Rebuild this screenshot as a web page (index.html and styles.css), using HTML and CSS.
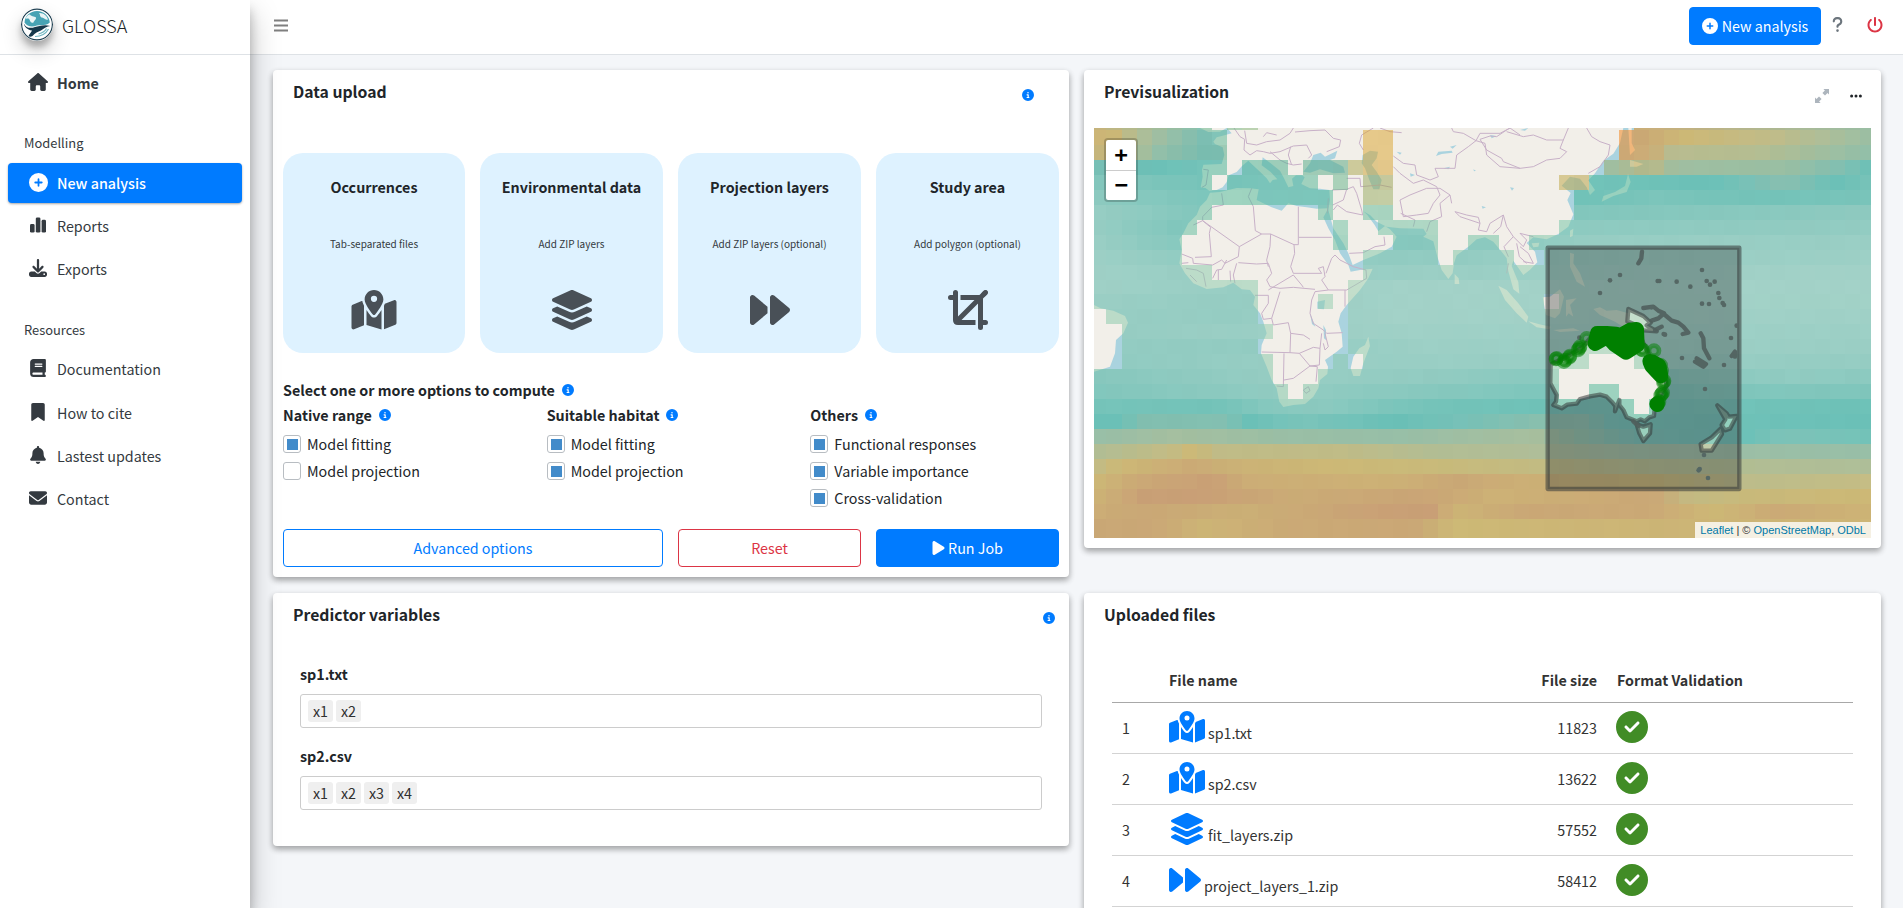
FILE: index.html
```html
<!DOCTYPE html>
<html lang="en">
<head>
<meta charset="utf-8">
<title>GLOSSA</title>
<link rel="stylesheet" href="styles.css">
</head>
<body>
<svg class="sprite" aria-hidden="true">
  <symbol id="home" viewBox="0 0 576 512"><path d="M575.8 255.5c0 18-15 32.1-32 32.1h-32l.7 160.2c0 2.7-.2 5.4-.5 8.1V472c0 22.1-17.9 40-40 40H456c-1.1 0-2.2 0-3.3-.1c-1.4 .1-2.8 .1-4.2 .1H416 392c-22.1 0-40-17.9-40-40V448 384c0-17.7-14.3-32-32-32H256c-17.7 0-32 14.3-32 32v64 24c0 22.1-17.9 40-40 40H160 128.1c-1.5 0-3-.1-4.5-.2c-1.2 .1-2.4 .2-3.6 .2H104c-22.1 0-40-17.9-40-40V360c0-.9 0-1.9 .1-2.8V287.6H32c-18 0-32-14-32-32.1c0-9 3-17 10-24L266.4 8c7-7 15-8 22-8s15 2 21 7L564.8 231.5c8 7 12 15 11 24z"/></symbol>
  <symbol id="plus" viewBox="0 0 512 512"><path d="M256 512A256 256 0 1 0 256 0a256 256 0 1 0 0 512zM232 344V280H168c-13.3 0-24-10.7-24-24s10.7-24 24-24h64V168c0-13.3 10.7-24 24-24s24 10.7 24 24v64h64c13.3 0 24 10.7 24 24s-10.7 24-24 24H280v64c0 13.3-10.7 24-24 24s-24-10.7-24-24z"/></symbol>
  <symbol id="info" viewBox="0 0 512 512"><path d="M256 512A256 256 0 1 0 256 0a256 256 0 1 0 0 512zM216 336h24V272H216c-13.3 0-24-10.7-24-24s10.7-24 24-24h48c13.3 0 24 10.7 24 24v88h8c13.3 0 24 10.7 24 24s-10.7 24-24 24H216c-13.3 0-24-10.7-24-24s10.7-24 24-24zm40-208a32 32 0 1 1 0 64 32 32 0 1 1 0-64z"/></symbol>
  <symbol id="check" viewBox="0 0 512 512"><path d="M256 512A256 256 0 1 0 256 0a256 256 0 1 0 0 512zM369 209L241 337c-9.4 9.4-24.6 9.4-33.9 0l-64-64c-9.4-9.4-9.4-24.6 0-33.9s24.6-9.4 33.9 0l47 47L335 175c9.4-9.4 24.6-9.4 33.9 0s9.4 24.6 0 33.9z"/></symbol>
  <symbol id="chart" viewBox="0 0 16 16"><rect x="0" y="7" width="4.6" height="8.6" rx="1.4"/><rect x="5.8" y="0.4" width="4.6" height="15.2" rx="1.4"/><rect x="11.6" y="2.8" width="4.4" height="12.8" rx="1.4"/></symbol>
  <symbol id="download" viewBox="0 0 512 512"><path d="M288 32c0-17.7-14.3-32-32-32s-32 14.3-32 32V274.7l-73.4-73.4c-12.5-12.5-32.8-12.5-45.3 0s-12.5 32.8 0 45.3l128 128c12.5 12.5 32.8 12.5 45.3 0l128-128c12.5-12.5 12.5-32.8 0-45.3s-32.8-12.5-45.3 0L288 274.7V32zM64 352c-35.3 0-64 28.7-64 64v32c0 35.3 28.7 64 64 64H448c35.3 0 64-28.7 64-64V416c0-35.3-28.7-64-64-64H346.5l-45.3 45.3c-25 25-65.5 25-90.5 0L165.5 352H64zm368 56a24 24 0 1 1 0 48 24 24 0 1 1 0-48z"/></symbol>
  <symbol id="book" viewBox="0 0 448 512"><path d="M96 0C43 0 0 43 0 96V416c0 53 43 96 96 96H384h32c17.7 0 32-14.3 32-32s-14.3-32-32-32V384c17.7 0 32-14.3 32-32V32c0-17.7-14.3-32-32-32H384 96zm0 384H352v64H96c-17.7 0-32-14.3-32-32s14.3-32 32-32zm32-240c0-8.8 7.2-16 16-16H336c8.8 0 16 7.2 16 16s-7.2 16-16 16H144c-8.8 0-16-7.2-16-16zm16 48H336c8.8 0 16 7.2 16 16s-7.2 16-16 16H144c-8.8 0-16-7.2-16-16s7.2-16 16-16z"/></symbol>
  <symbol id="bookmark" viewBox="0 0 384 512"><path d="M0 48V487.7C0 501.1 10.9 512 24.3 512c5 0 9.9-1.5 14-4.4L192 400 345.7 507.6c4.1 2.9 9 4.4 14 4.4c13.4 0 24.3-10.9 24.3-24.3V48c0-26.5-21.5-48-48-48H48C21.5 0 0 21.5 0 48z"/></symbol>
  <symbol id="bell" viewBox="0 0 448 512"><path d="M224 0c-17.7 0-32 14.3-32 32V51.2C119 66 64 130.6 64 208v18.8c0 47-17.3 92.4-48.5 127.6l-7.4 8.3c-8.4 9.4-10.4 22.9-5.3 34.4S19.4 416 32 416H416c12.6 0 24-7.4 29.2-18.9s3.1-25-5.3-34.4l-7.4-8.3C401.3 319.2 384 273.9 384 226.8V208c0-77.4-55-142-128-156.8V32c0-17.7-14.3-32-32-32zm45.3 493.3c12-12 18.7-28.3 18.7-45.3H224 160c0 17 6.7 33.3 18.7 45.3s28.3 18.7 45.3 18.7s33.3-6.7 45.3-18.7z"/></symbol>
  <symbol id="envelope" viewBox="0 0 512 512"><path d="M48 64C21.5 64 0 85.5 0 112c0 15.1 7.1 29.3 19.2 38.4L236.8 313.6c11.4 8.5 27 8.5 38.4 0L492.8 150.4c12.1-9.1 19.2-23.3 19.2-38.4c0-26.5-21.5-48-48-48H48zM0 176V384c0 35.3 28.7 64 64 64H448c35.3 0 64-28.7 64-64V176L294.4 339.2c-22.8 17.1-54 17.1-76.8 0L0 176z"/></symbol>
  <symbol id="power" viewBox="0 0 512 512"><path d="M288 32c0-17.7-14.3-32-32-32s-32 14.3-32 32V256c0 17.7 14.3 32 32 32s32-14.3 32-32V32zM143.5 120.6c13.6-11.3 15.4-31.5 4.1-45.1s-31.5-15.4-45.1-4.1C49.7 115.4 16 181.8 16 256c0 132.5 107.5 240 240 240s240-107.5 240-240c0-74.2-33.8-140.6-86.6-184.6c-13.6-11.3-33.8-9.4-45.1 4.1s-9.4 33.8 4.1 45.1c38.9 32.3 63.5 81 63.5 135.4c0 97.2-78.8 176-176 176s-176-78.8-176-176c0-54.4 24.7-103.1 63.5-135.4z"/></symbol>
  <symbol id="question" viewBox="0 0 320 512"><path d="M80 160c0-35.3 28.7-64 64-64h32c35.3 0 64 28.7 64 64v3.6c0 21.8-11.1 42.1-29.4 53.8l-42.2 27.1c-25.2 16.2-40.4 44.1-40.4 74V320c0 17.7 14.3 32 32 32s32-14.3 32-32v-1.4c0-8.2 4.2-15.8 11-20.2l42.2-27.1c36.6-23.6 58.8-64.1 58.8-107.7V160c0-70.7-57.3-128-128-128H144C73.3 32 16 89.3 16 160c0 17.7 14.3 32 32 32s32-14.3 32-32zm80 320a40 40 0 1 0 0-80 40 40 0 1 0 0 80z"/></symbol>
  <symbol id="layers" viewBox="0 0 576 512"><path d="M264.5 5.2c14.9-6.9 32.1-6.9 47 0l218.6 101c8.5 3.9 13.9 12.4 13.9 21.8s-5.4 17.9-13.9 21.8l-218.6 101c-14.9 6.9-32.1 6.9-47 0L45.9 149.8C37.4 145.8 32 137.3 32 128s5.4-17.9 13.9-21.8L264.5 5.2zM476.9 209.6l53.2 24.6c8.5 3.9 13.9 12.4 13.9 21.8s-5.4 17.9-13.9 21.8l-218.6 101c-14.9 6.9-32.1 6.9-47 0L45.9 277.8C37.4 273.8 32 265.3 32 256s5.4-17.9 13.9-21.8l53.2-24.6 152 70.2c23.4 10.8 50.4 10.8 73.8 0l152-70.2zm-152 198.2l152-70.2 53.2 24.6c8.5 3.9 13.9 12.4 13.9 21.8s-5.4 17.9-13.9 21.8l-218.6 101c-14.9 6.9-32.1 6.9-47 0L45.9 405.8C37.4 401.8 32 393.3 32 384s5.4-17.9 13.9-21.8l53.2-24.6 152 70.2c23.4 10.8 50.4 10.8 73.8 0z"/></symbol>
  <symbol id="map" viewBox="0 0 576 512"><path d="M408 120c0 54.6-73.1 151.9-105.2 192c-7.7 9.6-22 9.6-29.6 0C241.1 271.9 168 174.6 168 120C168 53.7 221.7 0 288 0s120 53.7 120 120zm8 80.4c3.5-6.9 6.7-13.8 9.6-20.6c.5-1.2 1-2.5 1.5-3.7l116-46.4C558.9 123.4 576 135 576 152V422.8c0 9.8-6 18.6-15.1 22.3L416 503V200.4zM137.6 138.3c2.4 14.1 7.2 28.3 12.8 41.5c2.9 6.8 6.1 13.7 9.6 20.6V451.8L32.9 502.7C17.1 509 0 497.4 0 480.4V209.6c0-9.8 6-18.6 15.1-22.3l122.6-49zM327.8 332c13.9-17.4 35.7-45.7 56.2-77V504.3L192 449.4V255c20.5 31.3 42.3 59.6 56.2 77c20.5 25.6 59.1 25.6 79.6 0zM288 152a40 40 0 1 0 0-80 40 40 0 1 0 0 80z"/></symbol>
  <symbol id="forward" viewBox="0 0 512 512"><path d="M52.5 440.6c-9.5 7.9-22.8 9.7-34.1 4.4S0 428.4 0 416V96C0 83.6 7.2 72.3 18.4 67s24.5-3.6 34.1 4.4L224 214.3V256v41.7L52.5 440.6zM256 352V256 128 96c0-12.4 7.2-23.7 18.4-29s24.5-3.6 34.1 4.4l192 160c7.3 6.1 11.5 15.1 11.5 24.6s-4.2 18.5-11.5 24.6l-192 160c-9.5 7.9-22.8 9.7-34.1 4.4s-18.4-16.6-18.4-29V352z"/></symbol>
  <symbol id="play" viewBox="0 0 384 512"><path d="M73 39c-14.8-9.1-33.4-9.4-48.5-.9S0 62.6 0 80V432c0 17.4 9.4 33.4 24.5 41.9s33.7 8.1 48.5-.9L361 297c14.3-8.7 23-24.2 23-41s-8.7-32.2-23-41L73 39z"/></symbol>
  <symbol id="crop" viewBox="0 0 40 40"><g fill="none" stroke="currentColor" stroke-width="5"><path d="M2.5 7.5H7.5V30Q7.5 32.5 10 32.5H27.5M7.5 2.5V10M12.5 7.5H32.5V37.5M32.5 32.5H37.5M37.5 2.5L9 31" stroke-linecap="butt"/><path d="M2.5 7.5H5M7.5 2.5V5M37.5 2.5L36 4M32.5 36V37.5M36 32.5H37.5" stroke-linecap="round"/></g></symbol>
  <symbol id="expand" viewBox="0 0 14 14"><path d="M8.4 0H14V5.6L12.500 4.100 10 6.600 7.400 4 9.900 1.500ZM5.600 14H0V8.400L1.500 9.900 4 7.400 6.600 10 4.100 12.500Z"/></symbol>
</svg>

<aside class="sidebar">
  <div class="brand">
    <svg class="logo" viewBox="0 0 32 32">
      <circle cx="16" cy="16" r="15.4" fill="#fff" stroke="#1f4052" stroke-width="1.2"/>
      <path d="M3.5 14C4 7 9 2.800 16 2.500C23 2.500 28.500 8 28.800 14C25 18 20 16 16 17C11 19 6 18 3.500 14Z" fill="#47a3b4"/>
      <path d="M4.500 10C6 7 8 5.500 9 6C10 8 13 7.500 15 9C15.500 11 13 12 12.500 14C9 15 9.500 12 8 10.500C7 9.500 5.500 10.500 4.500 10ZM18 4.500C22 4 26 7 27 11C24 12 23 9 20.500 9C18.500 8 19.500 6 18 4.500Z" fill="#e9f4f5"/>
      <path d="M2.800 15C5 20 10 20 14 18.500C18 17.500 24 15.500 29.200 17.500C26 17.500 23 20 20 22C17 23.500 14 24 11.500 27.500C10 28.500 8.500 28.500 7.500 27.500C8.500 25.500 10 24 11 22C7 21.500 3.500 19 2.800 15Z" fill="#17384b"/>
      <path d="M14 28C20 28 25 25 27.500 20.500M17.500 25.500C21 24.500 24 23 25.500 20" fill="none" stroke="#6fb5c0" stroke-width="1.200"/>
    </svg>
    <span class="brand-name">GLOSSA</span>
  </div>
  <nav class="menu">
    <a class="item strong"><i><svg width="20" height="18"><use href="#home"/></svg></i>Home</a>
    <div class="group">Modelling</div>
    <a class="item active"><i><svg width="19" height="19"><use href="#plus"/></svg></i>New analysis</a>
    <a class="item"><i><svg width="16" height="16"><use href="#chart"/></svg></i>Reports</a>
    <a class="item"><i><svg width="18" height="18"><use href="#download"/></svg></i>Exports</a>
    <div class="group">Resources</div>
    <a class="item"><i><svg width="16" height="18"><use href="#book"/></svg></i>Documentation</a>
    <a class="item offset"><i><svg width="14" height="18"><use href="#bookmark"/></svg></i>How to cite</a>
    <a class="item"><i><svg width="16" height="18"><use href="#bell"/></svg></i>Lastest updates</a>
    <a class="item"><i><svg width="18" height="18"><use href="#envelope"/></svg></i>Contact</a>
  </nav>
</aside>

<div class="page">
  <header class="topbar">
    <svg class="burger" width="14" height="13" viewBox="0 0 14 13"><path d="M0 1.500H14M0 6.500H14M0 11.500H14" stroke="#7f7f7f" stroke-width="1.800"/></svg>
    <div class="tools">
      <button class="btn solid new"><svg width="16" height="16"><use href="#plus"/></svg>New analysis</button>
      <svg class="q" width="11" height="17"><use href="#question"/></svg>
      <svg class="off" width="16" height="16"><use href="#power"/></svg>
    </div>
  </header>

  <main class="board">
    <section class="card upload">
      <div class="head"><h3>Data upload</h3><svg class="info" width="12" height="12"><use href="#info"/></svg></div>
      <div class="tiles">
        <div class="tile"><b>Occurrences</b><small>Tab-separated files</small><svg width="46" height="40"><use href="#map"/></svg></div>
        <div class="tile"><b>Environmental data</b><small>Add ZIP layers</small><svg width="46" height="40"><use href="#layers"/></svg></div>
        <div class="tile"><b>Projection layers</b><small>Add ZIP layers (optional)</small><svg width="40" height="40"><use href="#forward"/></svg></div>
        <div class="tile"><b>Study area</b><small>Add polygon (optional)</small><svg width="40" height="40"><use href="#crop"/></svg></div>
      </div>
      <div class="lead">Select one or more options to compute <svg class="info" width="12" height="12"><use href="#info"/></svg></div>
      <div class="options">
        <div><div class="opt-title">Native range <svg class="info" width="12" height="12"><use href="#info"/></svg></div>
          <label><span class="box on"></span>Model fitting</label><label><span class="box"></span>Model projection</label></div>
        <div><div class="opt-title">Suitable habitat <svg class="info" width="12" height="12"><use href="#info"/></svg></div>
          <label><span class="box on"></span>Model fitting</label><label><span class="box on"></span>Model projection</label></div>
        <div><div class="opt-title">Others <svg class="info" width="12" height="12"><use href="#info"/></svg></div>
          <label><span class="box on"></span>Functional responses</label><label><span class="box on"></span>Variable importance</label><label><span class="box on"></span>Cross-validation</label></div>
      </div>
      <div class="actions">
        <button class="btn blue">Advanced options</button>
        <button class="btn red">Reset</button>
        <button class="btn solid run"><svg width="13" height="16"><use href="#play"/></svg>Run Job</button>
      </div>
    </section>

    <section class="card preview">
      <div class="head"><h3>Previsualization</h3>
        <div class="head-tools"><svg class="expand" width="14" height="14"><use href="#expand"/></svg>
        <svg width="12" height="4" viewBox="0 0 12 4"><circle cx="1.600" cy="2" r="1.500"/><circle cx="6" cy="2" r="1.500"/><circle cx="10.400" cy="2" r="1.500"/></svg></div>
      </div>
      <div class="map">
        <svg class="canvas" width="777" height="410" viewBox="42 84 2331 1230">
          <g id="land" fill="#f2efe9">
            <path d="M441 84L455 100 425 108 410 112 400 125 405 132 428 142 433 165 425 192 370 194 366 210 368 230 362 262 376 264 388 272 410 270 428 262 440 246 446 226 470 216 486 198 505 182 515 192 540 215 560 235 570 250 578 240 592 238 572 216 545 196 548 172 562 182 600 212 612 235 625 262 640 258 636 236 648 226 666 226 674 232 664 252 690 265 720 266 748 270 750 300 745 330 760 385 790 430 805 460 818 495 850 480 900 460 935 440 950 410 930 388 915 378 895 394 884 375 862 345 850 334 870 345 890 365 920 380 960 385 1030 386 1040 402 1030 410 1060 424 1072 470 1085 510 1105 537 1118 520 1122 490 1130 466 1165 440 1190 418 1215 412 1240 425 1265 455 1280 475 1285 514 1300 568 1318 581 1315 546 1295 498 1300 482 1330 525 1350 509 1372 487 1365 455 1340 429 1360 412 1400 418 1435 402 1465 380 1480 343 1462 300 1472 279 1445 257 1470 230 1500 236 1520 262 1530 285 1545 270 1525 241 1545 220 1570 182 1600 161 1620 129 1630 84Z"/>
            <path d="M745 325L710 326 680 322 650 318 625 310 605 332 575 322 550 310 530 300 536 268 510 265 470 264 420 276 390 278 380 300 360 320 350 345 325 370 310 400 298 418 305 450 298 490 315 520 340 550 380 567 430 562 460 548 485 568 510 570 525 590 520 615 540 640 550 665 560 700 545 735 543 760 560 800 575 840 590 865 598 905 610 921 640 915 675 912 700 890 715 865 720 840 742 822 744 800 735 780 770 755 788 740 785 700 775 665 782 640 800 615 840 570 865 535 878 506 840 510 812 515 805 495 780 460 765 420 745 385 730 352Z"/>
            <path d="M865 710L870 738 850 790 840 828 820 828 812 805 820 770 838 745 855 735ZM42 615L62 625 100 632 135 648 144 668 130 700 108 720 105 760 90 800 42 815ZM1124 522L1136 535 1138 552 1124 552ZM360 84H440L420 95 385 96Z"/>
            <path d="M1255 557L1280 570 1315 610 1345 650 1340 668 1310 640 1275 600ZM1345 664L1375 672 1412 680 1408 688 1370 682ZM1388 592L1410 590 1440 568 1452 590 1440 640 1425 655 1398 645ZM1458 600L1490 595 1470 615 1480 650 1466 640 1458 650ZM1470 458L1482 462 1480 490 1500 520 1515 560 1490 545 1470 500ZM1540 627L1560 622 1580 632 1610 630 1645 640V690L1605 665 1560 645ZM1470 392L1480 386 1478 408 1470 412ZM1645 84H1655V130L1665 150 1650 165ZM1650 180L1690 192 1670 200 1650 200ZM1644 222L1652 246 1640 276 1600 288 1565 305 1570 288 1605 276 1635 258ZM1355 430L1378 428 1375 440 1360 442ZM1420 690L1480 685 1500 692 1440 696Z"/>
            <path id="aus" d="M1412 793L1411 850 1430 885 1428 905 1420 915 1445 925 1462 914 1490 911 1500 897 1530 889 1560 884 1580 890 1595 905 1606 918 1605 934 1618 900 1618 915 1630 930 1640 952 1670 964 1682 958 1694 964 1708 952 1722 948 1725 911 1760 857 1750 804 1710 771 1690 729 1670 686 1650 729 1630 761 1600 745 1580 707 1540 702 1510 739 1460 771Z"/>
            <path id="isles" d="M1645 627L1690 648 1712 668 1700 676 1730 694 1690 691 1670 676 1642 664ZM1670 973L1690 980 1712 973 1710 1000 1690 1023 1678 1000ZM1912 916L1940 940 1946 950 1970 948 1950 986 1935 991 1925 975 1936 958ZM1922 986L1926 1002 1895 1052 1865 1052 1862 1032 1895 1012Z"/>
          </g>
          <g id="water" fill="#aad3df">
            <path d="M670 215L690 190 700 165 722 158 735 170 772 152 765 175 750 180 790 200 795 218 760 220 720 208 690 218ZM848 165L870 152 894 155 890 175 875 195 890 215 905 240 898 268 880 268 868 240 855 205 845 190ZM1068 168L1075 155 1115 152 1118 158 1085 162ZM712 605L735 600 732 628 712 626ZM730 675L738 690V720L732 715ZM690 640L706 680 696 672Z"/>
            <path d="M950 155L965 158 960 164ZM990 220L1005 225 992 230ZM1090 205L1110 200 1105 208ZM1290 262L1302 264 1296 272ZM1230 105L1250 108 1235 115ZM1110 140L1130 135 1118 146ZM1320 90L1345 84 1335 92ZM1180 208L1188 212 1182 214ZM1205 318L1218 322 1208 326Z"/>
          </g>
          <g class="borders">
            <path d="M462 84L480 110 494 118 492 150 510 165 530 152 550 155 570 160 600 155 640 138 680 135 695 165 685 175M494 92L500 130 530 135 560 125 600 120 630 100 640 84M550 110L560 98 590 105M570 155L600 180 620 190 640 195 665 192M635 195L625 165 632 140M645 96L690 92 735 90 760 115 782 120 778 140 740 155M880 84L845 105 838 130 850 150M900 84L930 95 965 98"/>
            <path d="M370 208L385 210 378 255 366 262M425 280L430 315 395 322 368 350 368 362 340 375M368 362L478 440 475 470 435 490 425 480 398 495 340 490 338 475 305 462M368 362L392 382 388 400 394 470 345 472M478 440L545 402 526 392 520 320 505 290 515 265M545 402L572 402 570 440 560 480 565 500M572 402L642 434 644 460 632 500 640 520M655 320V412H755M655 412V434H642M475 488L530 492 565 490 575 520 560 540 570 560 600 565 640 562 705 568M565 570L640 525 665 555 670 562M640 520L725 520 715 505 730 500 735 530 725 540 745 570 800 570 860 535 858 510 820 500 780 480 765 465 755 475 738 520M745 570L705 575 695 600 690 640 700 670 730 690 740 700 788 698M525 586H565V610L545 640 550 658 575 655 600 575M575 655L580 675 625 668 632 700 670 705 690 718M632 700L630 758 545 756M630 758L658 760 700 742 720 745M658 760L690 798 718 795 720 745 725 700M612 760L610 860 590 858M612 840L640 835 690 798 712 800 708 845M670 870L685 860 690 872 678 880ZM735 700L745 740 735 750 730 730M795 570V620M398 535L410 510 425 508 440 480M415 510V540M450 512L452 545M470 490L460 525 465 550M305 490L325 488M318 505L350 510 370 520 378 560M330 525L350 545"/>
            <path d="M756 270L800 268 820 260 830 280 845 330 848 345 800 335 772 315 760 330M745 295L742 340M800 268L790 300 758 315M808 460L850 458 885 440 915 435 912 410M800 235L840 235 842 260 900 255 935 262M940 168L970 190 1005 195 1010 225 1050 240 1075 230 1065 205 1100 205 1125 205 1130 165 1165 140 1188 122 1150 100 1120 95 1115 84M940 200L960 220 1000 250 1030 240 1070 260 1080 285 1060 310 1045 340 1010 345 970 350 960 300 990 285 1040 265 1080 265 1110 285 1115 310M962 340L1005 360 1000 380M1040 395L1050 365 1085 350 1080 310 1110 285M1125 335L1140 350 1200 370 1195 352 1160 345 1125 335M1200 370L1195 390 1220 395 1230 370 1270 345 1262 380 1240 400M1188 122L1215 130 1220 165 1260 200 1320 205M1188 122L1200 100 1260 100 1290 84 1320 105M1270 345L1280 380 1300 410 1272 440 1285 470M1300 410L1330 440 1340 420 1320 400 1360 410M1320 440L1345 460 1360 490 1330 485M1310 430L1318 470 1340 490M1285 490L1280 520"/>
            <path d="M1200 118L1230 108 1250 110 1280 90 1290 84M1200 118L1220 150 1265 175 1270 185 1320 205 1360 200 1400 180 1440 175 1460 155 1440 145 1450 120 1400 120 1360 105 1330 110 1280 95M1450 120L1465 84M1520 84L1535 110 1560 125 1590 135 1585 165 1560 200 1525 220"/>
          </g>
          <g id="raster" opacity=".5" shape-rendering="crispEdges"></g>
          <path class="zone" fill-rule="evenodd" d="M1403 443H1978V1167H1403ZM1412 793L1411 850 1430 885 1428 905 1420 915 1445 925 1462 914 1490 911 1500 897 1530 889 1560 884 1580 890 1595 905 1606 918 1605 934 1618 900 1618 915 1630 930 1640 952 1670 964 1682 958 1694 964 1708 952 1722 948 1725 911 1760 857 1750 804 1710 771 1690 729 1670 686 1650 729 1630 761 1600 745 1580 707 1540 702 1510 739 1460 771ZM1645 627L1690 648 1712 668 1700 676 1730 694 1690 691 1670 676 1642 664ZM1670 973L1690 980 1712 973 1710 1000 1690 1023 1678 1000ZM1912 916L1940 940 1946 950 1970 948 1950 986 1935 991 1925 975 1936 958ZM1922 986L1926 1002 1895 1052 1865 1052 1862 1032 1895 1012Z"/>
          <path class="chain" d="M1686 455L1684 475 1675 490M1690 624L1720 620 1735 632 1752 640 1735 655 1715 662M1755 645L1775 662 1795 668 1810 680 1825 698 1808 702M1725 690L1745 680M1660 964L1675 978M1862 700L1870 715 1872 745 1888 775M1845 785L1870 800 1878 792 1850 775M1955 768L1965 755 1965 770"/>
          <g id="islets"></g>
          <g id="sightings"></g>
        </svg>
        <div class="zoom"><span>+</span><span>−</span></div>
        <div class="credit"><a>Leaflet</a> | © <a>OpenStreetMap</a>, <a>ODbL</a></div>
      </div>
    </section>

    <section class="card predictors">
      <div class="head"><h3>Predictor variables</h3><svg class="info" width="12" height="12"><use href="#info"/></svg></div>
      <div class="field"><b>sp1.txt</b><div class="tags"><span>x1</span><span>x2</span></div></div>
      <div class="field"><b>sp2.csv</b><div class="tags"><span>x1</span><span>x2</span><span>x3</span><span>x4</span></div></div>
    </section>

    <section class="card files">
      <div class="head"><h3>Uploaded files</h3></div>
      <div class="table">
        <div class="row th"><span></span><span>File name</span><span class="num">File size</span><span>Format Validation</span></div>
        <div class="row"><span>1</span><span class="file"><svg width="36" height="32"><use href="#map"/></svg>sp1.txt</span><span class="num">11823</span><svg class="ok" width="32" height="32"><use href="#check"/></svg></div>
        <div class="row"><span>2</span><span class="file"><svg width="36" height="32"><use href="#map"/></svg>sp2.csv</span><span class="num">13622</span><svg class="ok" width="32" height="32"><use href="#check"/></svg></div>
        <div class="row"><span>3</span><span class="file"><svg width="36" height="32"><use href="#layers"/></svg>fit_layers.zip</span><span class="num">57552</span><svg class="ok" width="32" height="32"><use href="#check"/></svg></div>
        <div class="row"><span>4</span><span class="file"><svg width="32" height="32"><use href="#forward"/></svg>project_layers_1.zip</span><span class="num">58412</span><svg class="ok" width="32" height="32"><use href="#check"/></svg></div>
      </div>
    </section>
  </main>
</div>
<script src="map.js"></script>
</body>
</html>
```
FILE: map.js
```javascript
// Raster layer: one entry per row of cells, as colour stops along x (map pixels).
const rows = [
  [[0,'c9b47a'],[120,'80c4b8'],[268,'e6c98c'],[299,'e6c98c'],[540,'ccae78'],[777,'9bbfa5']],
  [[0,'ccb577'],[20,'ccb878'],[45,'b0be97'],[75,'98bfa8'],[110,'7dbfb3'],[130,'82c5b9'],[262,'80c5b9'],[275,'c2bb86'],[300,'c2bb86'],[520,'d0a878'],[550,'caaa76'],[590,'cdb977'],[680,'c0bc8a'],[740,'aabf9c'],[777,'9bbfa5']],
  [[0,'c8b579'],[18,'c2b884'],[40,'b0be97'],[66,'92bfa9'],[110,'7abdb0'],[262,'80bfb0'],[275,'c2bb86'],[300,'c2bb86'],[520,'cda676'],[560,'cbb079'],[575,'b8bc90'],[660,'b5be92'],[777,'92bfaa']],
  [[0,'78bfb5'],[60,'6cc1b8'],[130,'78c4ba'],[150,'76c2b8'],[250,'80bcaf'],[260,'a8bd98'],[280,'c0ba86'],[300,'c0ba86'],[510,'9cc0a6'],[545,'b0b98e'],[565,'b5bb8e'],[580,'a0bfa2'],[690,'9abfa3'],[740,'86c0b0'],[777,'6cc1b8']],
  [[0,'84c7bd'],[120,'76c4ba'],[240,'80c5ba'],[270,'9fbd9e'],[300,'a3bb98'],[470,'b4bb90'],[490,'b0b98f'],[500,'72c3b9'],[620,'6cc1b8'],[650,'78c2b8'],[690,'8abfb0'],[740,'6cc1b8'],[777,'78c2b8']],
  [[0,'8ecbc1'],[120,'7cc6bc'],[250,'7dc6bb'],[270,'a0bfa0'],[300,'a0bfa0'],[480,'70c2b8'],[560,'7cc5bb'],[660,'74c3b9'],[777,'7ac5bb']],
  [[0,'98cec4'],[110,'82c7bd'],[240,'85c6bb'],[480,'82c7bd'],[777,'8fcac0']],
  [[0,'98cec4'],[80,'82c7bd'],[300,'8ccac0'],[480,'8ecbc1'],[777,'93ccc2']],
  [[0,'9acfc5'],[90,'86c8be'],[300,'86c8be'],[400,'8ccac0'],[500,'98cec4'],[777,'9acfc5']],
  [[0,'9dd0c6'],[90,'92ccc2'],[350,'92ccc2'],[450,'9acfc5'],[777,'9dd0c6']],
  [[0,'a0d1c7'],[110,'98cec4'],[300,'9acfc5'],[777,'a3d2c8']],
  [[0,'a0d1c7'],[150,'98cec4'],[300,'a3d2c8'],[777,'a3d2c8']],
  [[0,'9bcfc5'],[140,'96cdc3'],[300,'a3d2c8'],[777,'a2d2c7']],
  [[0,'98cec4'],[140,'96cdc3'],[300,'a3d2c8'],[777,'a0d1c7']],
  [[0,'96cdc3'],[300,'a0d1c7'],[777,'9dd0c6']],
  [[0,'93ccc2'],[180,'93ccc2'],[330,'9dd0c6'],[777,'9bcfc5']],
  [[0,'90cbc1'],[200,'98cec4'],[330,'9acfc5'],[550,'98cec4'],[777,'96cdc3']],
  [[0,'88c8be'],[210,'98cec4'],[330,'93ccc2'],[540,'82c7bd'],[700,'92ccc2'],[777,'8ccac0']],
  [[0,'82c7bd'],[200,'93ccc2'],[330,'88c9bf'],[520,'7ac5bb'],[700,'82c7bd'],[777,'80c6bc']],
  [[0,'76c4ba'],[120,'74c3b9'],[180,'88c9bf'],[230,'8ccac0'],[330,'76c4ba'],[430,'70c2b8'],[520,'76c4ba'],[777,'6ec2b8']],
  [[0,'6cc1b8'],[25,'6cc1b8'],[50,'82bfb0'],[130,'84c0b2'],[155,'6cc1b8'],[210,'7cc5bb'],[300,'6ac0b7'],[370,'78c2b8'],[440,'88bfae'],[490,'8abfae'],[520,'72c3b9'],[777,'6cc1b8']],
  [[0,'98bfa8'],[80,'a5bfa0'],[200,'9abfa6'],[300,'98bfa8'],[440,'a8bf9e'],[540,'78c2b8'],[650,'6cc1b8'],[690,'7ec3b8'],[777,'74c3b9']],
  [[0,'b0be96'],[80,'c4bc84'],[98,'cdb977'],[125,'c0bc88'],[250,'c0bc88'],[340,'b2be95'],[430,'b0be98'],[540,'a0bfa5'],[777,'98bfa8']],
  [[0,'c0bc88'],[25,'cdb977'],[100,'cbaa77'],[130,'cbb177'],[240,'cdb977'],[350,'c8bb7c'],[450,'c2bc84'],[560,'b5bd90'],[777,'aebf9a']],
  [[0,'cdb977'],[40,'cbaa77'],[120,'c9a077'],[150,'ccae77'],[300,'cdb277'],[360,'caa877'],[420,'ccaf77'],[560,'cbb777'],[660,'bcbd8c'],[777,'c5bd85']],
  [[0,'cdb577'],[50,'c9a077'],[110,'c9a077'],[200,'cbac77'],[330,'caa577'],[400,'cdb277'],[560,'caa877'],[600,'c3bc84'],[650,'c8ba7c'],[777,'cdb977']],
  [[0,'ccae77'],[50,'caa877'],[150,'cbb077'],[300,'c9a077'],[340,'c9a077'],[360,'cdb577'],[430,'caa877'],[560,'cbaa77'],[620,'cdb977'],[680,'cbaa77'],[777,'cdb577']],
  [[0,'caa877'],[60,'caa877'],[110,'cdb577'],[200,'cbaa77'],[320,'caa877'],[360,'cdb977'],[560,'ccb577'],[777,'cdb577']]
];
// Spans of each row that carry no data.
const gaps = [
  [[118,133],[163,540]], [[133,268],[299,524]], [[133,268],[299,524]],
  [[133,148],[193,208],[299,509]], [[118,133],[223,238],[253,268],[299,464]],
  [[238,268],[299,479]], [[118,223],[238,268],[299,479]],
  [[103,238],[253,284],[344,464]], [[88,238],[253,299],[344,374],[404,434]],
  [[88,268],[344,359],[419,449]], [[118,268]], [[163,253]],
  [[163,223],[238,253],[449,464]], [[0,12],[163,253]], [[0,28],[178,253]],
  [[0,28],[163,253]], [[0,28],[178,238],[253,268],[494,540]],
  [[178,223],[464,565]], [[193,208],[464,494],[524,565]], [[540,555]]
];
const NS = 'http://www.w3.org/2000/svg';
const add = (parent, tag, attrs) => {
  const el = document.createElementNS(NS, tag);
  for (const k in attrs) el.setAttribute(k, attrs[k]);
  document.getElementById(parent).appendChild(el);
};
const rgb = h => [0, 2, 4].map(i => parseInt(h.substr(i, 2), 16));
const ocean = rgb('aad3df');
const edges = [0, 12, 28];
while (edges[edges.length - 1] < 765) edges.push(Math.round(28 + 15.06 * (edges.length - 2)));
edges.push(777);
const rowTop = r => (r === 0 ? 0 : r >= 12 ? 1 + 15 * (r - 1) : 2 + 15 * (r - 1));

rows.forEach((stops, r) => {
  const y0 = rowTop(r), y1 = r === rows.length - 1 ? 410 : rowTop(r + 1);
  for (let c = 0; c < edges.length - 1; c++) {
    const x = (edges[c] + edges[c + 1]) / 2;
    if ((gaps[r] || []).some(([a, b]) => x > a && x < b)) continue;
    let i = 1;
    while (i < stops.length - 1 && stops[i][0] < x) i++;
    const [xa, ca] = stops[i - 1], [xb, cb] = stops[i];
    const t = Math.max(0, Math.min(1, (x - xa) / (xb - xa)));
    const a = rgb(ca), b = rgb(cb);
    const jitter = ((c * 7 + r * 13) % 5 - 2) * 0.3;
    const mix = a.map((v, j) => Math.max(0, Math.min(255, Math.round(2 * (v + (b[j] - v) * t + jitter) - ocean[j]))));
    add('raster', 'rect', {
      x: 42 + edges[c] * 3, y: 84 + y0 * 3,
      width: (edges[c + 1] - edges[c]) * 3, height: (y1 - y0) * 3,
      fill: `rgb(${mix})`
    });
  }
});

[[1590,541],[1620,525],[1560,579],[1733,543],[1738,543],[1790,545],[1831,560],[1866,510],[1880,543],[1890,554],
 [1904,545],[1715,622],[1915,579],[1918,594],[1928,609],[1932,615],[1866,611],[1887,612],[1953,714],[1970,677],
 [1932,795],[1875,867],[1806,774],[1859,1107],[1856,1111],[1884,1134],[1498,713],[1751,702],[1755,704],[1872,1065]]
  .forEach(([cx, cy]) => add('islets', 'circle', { cx, cy, r: 7 }));

[[1428,777],[1430,775],[1452,785],[1456,780],[1470,768],[1468,772],[1498,745],[1500,740],[1494,750],[1520,715],
 [1688,750],[1685,748],[1722,752],[1750,847],[1752,843],[1745,882],[1742,886],[1748,878],[1737,905],[1742,796],[1745,812]]
  .forEach(([cx, cy]) => add('sightings', 'circle', { cx, cy, r: 15, class: 'ring' }));

const cluster = pts => add('sightings', 'polygon', { points: pts, class: 'cluster' });
cluster('1545,731 1552,700 1580,700 1608,702 1622,706 1650,690 1670,688 1672,735 1638,757 1605,735 1582,710');
cluster('1709,784 1718,786 1737,797 1743,828 1728,812 1715,798');
cluster('1730,912 1733,910 1732,914');
```
FILE: styles.css
```css
* { box-sizing: border-box; }
body {
  margin: 0;
  height: 908px;
  overflow: hidden;
  display: flex;
  background: #f4f6f9;
  color: #212529;
  font: 14.3px/24px "Noto Sans CJK SC", "Open Sans", sans-serif;
}
svg { fill: currentColor; flex: none; display: block; }
.sprite { position: absolute; width: 0; height: 0; }

.sidebar {
  position: relative;
  z-index: 2;
  width: 250px;
  height: 908px;
  flex: none;
  background: #fff;
  color: #343a40;
  box-shadow: 0 14px 28px rgba(0,0,0,.25), 0 10px 10px rgba(0,0,0,.22);
}
.brand {
  height: 55px;
  border-bottom: 1px solid #dee2e6;
  padding: 0 0 3px 21px;
  display: flex;
  align-items: center;
  gap: 9px;
}
.logo {
  width: 32px;
  height: 33px;
  border-radius: 50%;
  margin-top: -3px;
  box-shadow: 0 10px 20px rgba(0,0,0,.19), 0 6px 6px rgba(0,0,0,.23);
}
.brand-name { font-size: 18px; font-weight: 300; color: #212529; margin-top: -2px; }
.menu { padding: 8px; display: flex; flex-direction: column; gap: 3px; }
.item {
  height: 40px;
  padding-left: 16px;
  display: flex;
  align-items: center;
  border-radius: 4px;
}
.item i { width: 28px; margin: -2px 5px 0 0; display: flex; justify-content: center; }
.strong { font-weight: 700; }
.active {
  background: #007bff;
  color: #fff;
  font-weight: 500;
  box-shadow: 0 1px 3px rgba(0,0,0,.12), 0 1px 2px rgba(0,0,0,.24);
}
.group { height: 54px; padding: 23px 0 0 16px; font-size: 12.900px; line-height: 28px; }
.active ~ .group { padding-top: 24px; }
.offset { margin-top: 1px; }

.page { flex: 1; min-width: 0; height: 908px; overflow: hidden; }
.topbar {
  height: 55px;
  padding: 0 20px 0 24px;
  background: #fff;
  border-bottom: 1px solid #dee2e6;
  display: flex;
  align-items: center;
  justify-content: space-between;
}
.burger { margin-top: -3px; }
.tools { display: flex; align-items: center; margin-top: -3px; color: #6c757d; }
.q { margin: -2px 24px 0 11px; }
.off { color: #dc3545; margin-top: -2px; }

.btn {
  height: 38px;
  border: 1px solid #007bff;
  border-radius: 4px;
  background: #fff;
  font: inherit;
  display: flex;
  align-items: center;
  justify-content: center;
  gap: 4px;
  padding: 0;
}
.blue { color: #007bff; }
.red { color: #dc3545; border-color: #dc3545; }
.solid { color: #fff; background: #007bff; }
.new { width: 132px; }
.run { gap: 3px; }

.board {
  padding: 15px 22px 0 23px;
  display: grid;
  grid-template-columns: 796px 797px;
  gap: 16px 15px;
  align-items: start;
}
.card {
  background: #fff;
  border-radius: 4px;
  box-shadow: 0 3px 6px rgba(0,0,0,.16), 0 3px 6px rgba(0,0,0,.23);
}
.head {
  height: 45px;
  padding: 0 20px;
  display: flex;
  align-items: center;
  justify-content: space-between;
}
h3 { margin: -2px 0 0; font-size: 15.75px; font-weight: 700; line-height: 24px; }
.info { color: #007bff; }
.head .info { margin-top: 5px; }

.upload { height: 507px; padding: 0 10px; }
.upload .head { padding: 0 25px 0 10px; }
.tiles { margin-top: 38px; display: grid; grid-template-columns: 182px 183px 183px 183px; gap: 15px; }
.tile {
  height: 200px;
  border-radius: 20px;
  background: #def2ff;
  padding-top: 22px;
  display: flex;
  flex-direction: column;
  align-items: center;
}
.tile b { line-height: 24px; }
.tile small { font-size: 10px; line-height: 20px; margin-top: 35px; color: #343a40; }
.tile svg { margin-top: 36px; color: #495057; }
.lead, .opt-title { font-weight: 700; height: 25px; line-height: 25px; display: flex; align-items: center; gap: 7px; }
.lead { margin-top: 24px; }
.lead .info, .opt-title .info { margin-top: 1px; }
.options { display: grid; grid-template-columns: repeat(3, 1fr); gap: 15px; height: 127px; }
label { display: flex; align-items: center; height: 27px; gap: 6px; }
.opt-title + label { margin-top: 3px; }
.box { width: 18px; height: 18px; border: 1px solid #b8bdc2; border-radius: 3px; padding: 2.500px; }
.on { background: #428bca content-box; }
.actions { display: grid; grid-template-columns: 380px 183px 183px; gap: 15px; }

.preview { height: 478px; padding: 0 10px; }
.preview .head { padding: 0 0 0 10px; }
.head-tools { display: flex; align-items: center; gap: 21px; margin: 7px 9px 0 0; }
.expand { color: #adb5bd; }
.map { position: relative; margin-top: 13px; width: 777px; height: 410px; background: #aad3df; overflow: hidden; }
.borders { fill: none; stroke: #c8b1c8; stroke-width: 3; }
.zone { fill: #353839; fill-opacity: .35; stroke: #353839; stroke-opacity: .55; stroke-width: 13; stroke-linejoin: round; }
.chain { fill: none; stroke: #505f5d; stroke-width: 13; stroke-linecap: round; stroke-linejoin: round; opacity: .9; }
#islets { fill: #556764; }
.ring { fill: green; fill-opacity: .2; stroke: green; stroke-opacity: .5; stroke-width: 14; }
.cluster { fill: green; stroke: green; stroke-width: 44; stroke-linejoin: round; }
.zoom {
  position: absolute;
  left: 10px;
  top: 10px;
  width: 34px;
  height: 64px;
  border: 2px solid rgba(0,0,0,.2);
  border-radius: 4px;
  background: #fff;
  background-clip: padding-box;
  display: flex;
  flex-direction: column;
  font: bold 22px/30px "DejaVu Sans Mono", monospace;
  color: #000;
  text-align: center;
}
.zoom span { height: 30px; }
.zoom span + span { border-top: 1px solid #ccc; line-height: 28px; }
.credit {
  position: absolute;
  right: 0;
  bottom: 0;
  padding: 0 5px;
  height: 16px;
  background: rgba(255,255,255,.8);
  color: #333;
  font: 11px/16px "Liberation Sans", sans-serif;
}
.credit a { color: #0078a8; }

.predictors { height: 253px; }
.predictors .head { padding: 0 14px 0 20px; }
.field { padding: 0 27px; height: 82px; }
.predictors .head + .field { margin-top: 24px; }
.field b { display: block; line-height: 24px; }
.tags {
  margin-top: 8px;
  height: 34px;
  border: 1px solid #ccc;
  border-radius: 3px;
  padding: 5px 7px;
  display: flex;
  gap: 3px;
  color: #303030;
}
.tags span { width: 25px; height: 22px; line-height: 22px; border-radius: 3px; background: #efefef; text-align: center; }

.files { height: 400px; }
.table { margin: 22px 28px 0; color: #333; }
.row {
  height: 51px;
  border-bottom: 1px solid #d3d3d3;
  display: grid;
  grid-template-columns: 57px 330px 98px 1fr;
  line-height: 49px;
}
.row > span:first-child { padding-left: 10px; }
.th { height: 43px; line-height: 40px; font-weight: 700; border-bottom-color: #a8a8a8; }
.num { text-align: right; }
.row > :last-child { margin-left: 20px; }
.row > .ok { color: #418c26; margin: 8px 0 0 19px; }
.file { display: flex; gap: 3px; line-height: 59px; }
.file svg { color: #007bff; margin-top: 8px; }
```
